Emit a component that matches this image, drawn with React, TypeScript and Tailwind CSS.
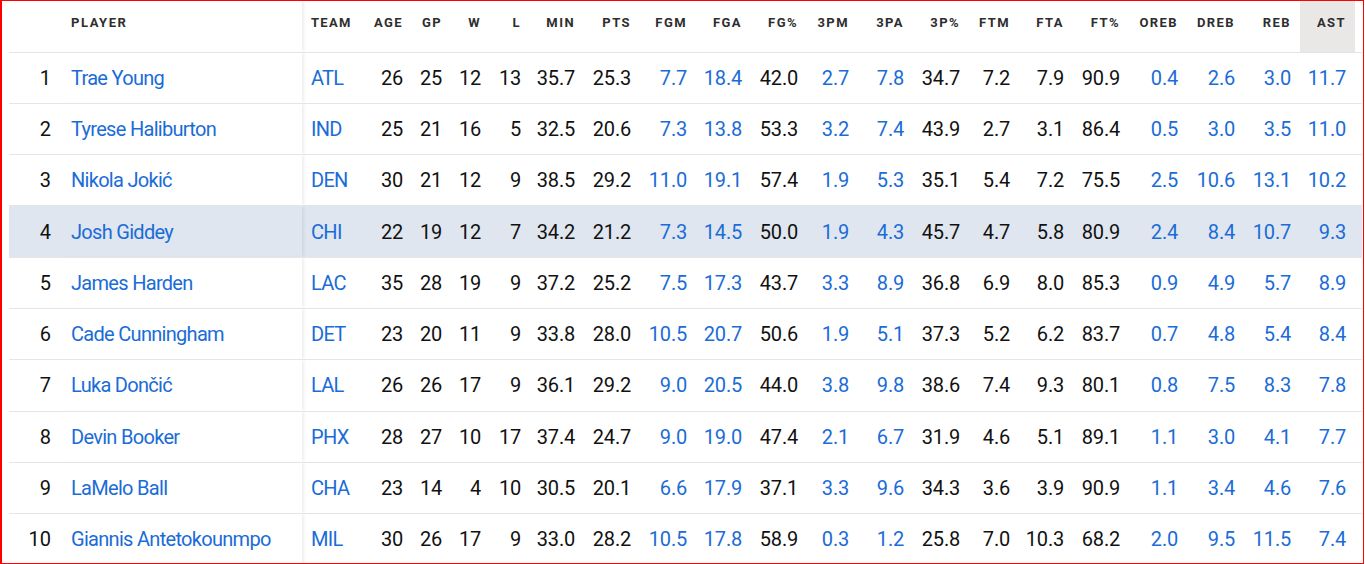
import React from "react";

type Row = [number, string, string, ...string[]];

const rows: Row[] = [
  [1, "Trae Young", "ATL", "26", "25", "12", "13", "35.7", "25.3", "7.7", "18.4", "42.0", "2.7", "7.8", "34.7", "7.2", "7.9", "90.9", "0.4", "2.6", "3.0", "11.7"],
  [2, "Tyrese Haliburton", "IND", "25", "21", "16", "5", "32.5", "20.6", "7.3", "13.8", "53.3", "3.2", "7.4", "43.9", "2.7", "3.1", "86.4", "0.5", "3.0", "3.5", "11.0"],
  [3, "Nikola Jokić", "DEN", "30", "21", "12", "9", "38.5", "29.2", "11.0", "19.1", "57.4", "1.9", "5.3", "35.1", "5.4", "7.2", "75.5", "2.5", "10.6", "13.1", "10.2"],
  [4, "Josh Giddey", "CHI", "22", "19", "12", "7", "34.2", "21.2", "7.3", "14.5", "50.0", "1.9", "4.3", "45.7", "4.7", "5.8", "80.9", "2.4", "8.4", "10.7", "9.3"],
  [5, "James Harden", "LAC", "35", "28", "19", "9", "37.2", "25.2", "7.5", "17.3", "43.7", "3.3", "8.9", "36.8", "6.9", "8.0", "85.3", "0.9", "4.9", "5.7", "8.9"],
  [6, "Cade Cunningham", "DET", "23", "20", "11", "9", "33.8", "28.0", "10.5", "20.7", "50.6", "1.9", "5.1", "37.3", "5.2", "6.2", "83.7", "0.7", "4.8", "5.4", "8.4"],
  [7, "Luka Dončić", "LAL", "26", "26", "17", "9", "36.1", "29.2", "9.0", "20.5", "44.0", "3.8", "9.8", "38.6", "7.4", "9.3", "80.1", "0.8", "7.5", "8.3", "7.8"],
  [8, "Devin Booker", "PHX", "28", "27", "10", "17", "37.4", "24.7", "9.0", "19.0", "47.4", "2.1", "6.7", "31.9", "4.6", "5.1", "89.1", "1.1", "3.0", "4.1", "7.7"],
  [9, "LaMelo Ball", "CHA", "23", "14", "4", "10", "30.5", "20.1", "6.6", "17.9", "37.1", "3.3", "9.6", "34.3", "3.6", "3.9", "90.9", "1.1", "3.4", "4.6", "7.6"],
  [10, "Giannis Antetokounmpo", "MIL", "30", "26", "17", "9", "33.0", "28.2", "10.5", "17.8", "58.9", "0.3", "1.2", "25.8", "7.0", "10.3", "68.2", "2.0", "9.5", "11.5", "7.4"],
];

const statCols: { label: string; w: string; blue: boolean }[] = [
  { label: "AGE", w: "w-[50px]", blue: false },
  { label: "GP", w: "w-[39px]", blue: false },
  { label: "W", w: "w-[39px]", blue: false },
  { label: "L", w: "w-[40px]", blue: false },
  { label: "MIN", w: "w-[54px]", blue: false },
  { label: "PTS", w: "w-[56px]", blue: false },
  { label: "FGM", w: "w-[56px]", blue: true },
  { label: "FGA", w: "w-[55px]", blue: true },
  { label: "FG%", w: "w-[56px]", blue: false },
  { label: "3PM", w: "w-[51px]", blue: true },
  { label: "3PA", w: "w-[55px]", blue: true },
  { label: "3P%", w: "w-[56px]", blue: false },
  { label: "FTM", w: "w-[50px]", blue: false },
  { label: "FTA", w: "w-[54px]", blue: false },
  { label: "FT%", w: "w-[56px]", blue: false },
  { label: "OREB", w: "w-[58px]", blue: true },
  { label: "DREB", w: "w-[57px]", blue: true },
  { label: "REB", w: "w-[56px]", blue: true },
  { label: "AST", w: "w-[55px]", blue: true },
];

const shadow = "shadow-[3px_0_3px_-1px_rgba(0,0,0,0.07)]";

export default function App() {
  return (
    <div className="w-[1365px] h-[564px] bg-white overflow-hidden" style={{ fontFamily: "Roboto, 'Liberation Sans', sans-serif" }}>
      <div className="w-[1364px] h-[564px] border border-l-2 border-[#ff0000] pl-[7px] overflow-hidden">
        <table className="table-fixed border-collapse w-[1353px]">
          <colgroup>
            <col className="w-[52px]" />
            <col className="w-[241px]" />
            <col className="w-[60px]" />
            {statCols.map((c) => (
              <col key={c.label} className={c.w} />
            ))}
            <col className="w-[7px]" />
          </colgroup>
          <thead>
            <tr className="h-[51px] border-b border-[#e5e5e5]">
              <th className="p-0" />
              <th className={`align-top pt-[14px] pl-[10px] text-left text-[13px] leading-[16px] font-bold tracking-[0.12em] text-[#2e2e2e] bg-white ${shadow}`}>
                PLAYER
              </th>
              <th className="align-top pt-[14px] pl-[9px] text-left text-[13px] leading-[16px] font-bold tracking-[0.1em] text-[#2e2e2e]">
                TEAM
              </th>
              {statCols.map((c) => (
                <th
                  key={c.label}
                  className={`align-top pt-[14px] pr-[9px] text-right text-[13px] leading-[16px] font-bold tracking-[0.11em] text-[#2e2e2e] whitespace-nowrap ${
                    c.label === "AST" ? "bg-[#e9e8e7]" : ""
                  }`}
                >
                  {c.label}
                </th>
              ))}
              <th className="p-0" />
            </tr>
          </thead>
          <tbody>
            {rows.map((r) => {
              const [rank, name, team, ...stats] = r;
              const hl = rank === 4;
              return (
                <tr key={rank} className={`h-[51.3px] border-b border-[#e5e5e5] ${hl ? "bg-[#dfe6ef]" : ""}`}>
                  <td className="pr-[10px] text-right text-[20px] leading-[24px] text-[#111]">{rank}</td>
                  <td className={`pl-[10px] text-left text-[20px] leading-[24px] tracking-[-0.7px] text-[#1a6cd7] whitespace-nowrap ${hl ? "bg-[#dfe6ef]" : "bg-white"} ${shadow}`}>
                    {name}
                  </td>
                  <td className="pl-[9px] text-left text-[20px] leading-[24px] tracking-[-0.7px] text-[#1a6cd7]">{team}</td>
                  {stats.map((s, i) => (
                    <td
                      key={i}
                      className={`pr-[9px] text-right text-[20px] leading-[24px] tracking-[-0.2px] whitespace-nowrap ${
                        statCols[i].blue ? "text-[#1a6cd7]" : "text-[#111]"
                      }`}
                    >
                      {s}
                    </td>
                  ))}
                  <td className="p-0" />
                </tr>
              );
            })}
          </tbody>
        </table>
      </div>
    </div>
  );
}
